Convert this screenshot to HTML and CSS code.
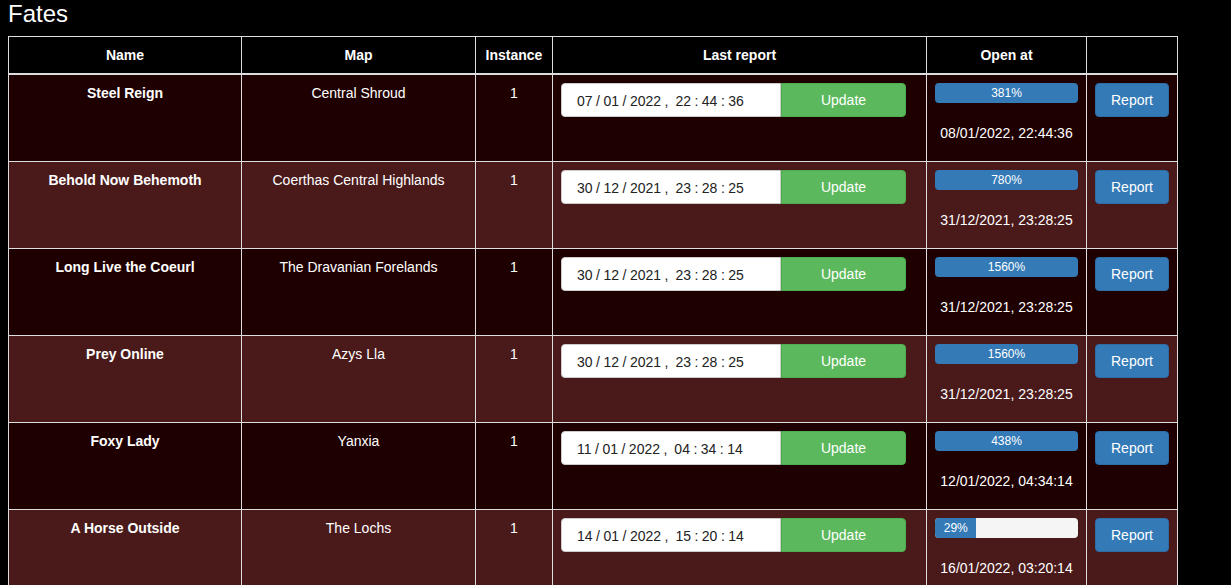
FILE: index.html
```html
<!DOCTYPE html>
<html>
<head>
    <meta charset="UTF-8">
    <title>Fates</title>
    <link rel="stylesheet" href="styles.css">
</head>
<body>
    <h1 class="page-title">Fates</h1>
    <table class="fate-table">
        <colgroup>
            <col class="col-name">
            <col class="col-map">
            <col class="col-instance">
            <col class="col-report">
            <col class="col-open">
            <col class="col-action">
        </colgroup>
        <thead>
            <tr>
                <th>Name</th>
                <th>Map</th>
                <th>Instance</th>
                <th>Last report</th>
                <th>Open at</th>
                <th></th>
            </tr>
        </thead>
        <tbody>
            <tr>
                <td class="fate-name">Steel Reign</td>
                <td>Central Shroud</td>
                <td>1</td>
                <td>
                    <div class="input-group">
                        <span class="date-input">07 / 01 / 2022 ,  22 : 44 : 36</span>
                        <button class="btn btn-success">Update</button>
                    </div>
                </td>
                <td>
                    <div class="progress"><div class="progress-bar" style="width: 100%">381%</div></div>
                    <div class="open-time">08/01/2022, 22:44:36</div>
                </td>
                <td><button class="btn btn-primary">Report</button></td>
            </tr>
            <tr>
                <td class="fate-name">Behold Now Behemoth</td>
                <td>Coerthas Central Highlands</td>
                <td>1</td>
                <td>
                    <div class="input-group">
                        <span class="date-input">30 / 12 / 2021 ,  23 : 28 : 25</span>
                        <button class="btn btn-success">Update</button>
                    </div>
                </td>
                <td>
                    <div class="progress"><div class="progress-bar" style="width: 100%">780%</div></div>
                    <div class="open-time">31/12/2021, 23:28:25</div>
                </td>
                <td><button class="btn btn-primary">Report</button></td>
            </tr>
            <tr>
                <td class="fate-name">Long Live the Coeurl</td>
                <td>The Dravanian Forelands</td>
                <td>1</td>
                <td>
                    <div class="input-group">
                        <span class="date-input">30 / 12 / 2021 ,  23 : 28 : 25</span>
                        <button class="btn btn-success">Update</button>
                    </div>
                </td>
                <td>
                    <div class="progress"><div class="progress-bar" style="width: 100%">1560%</div></div>
                    <div class="open-time">31/12/2021, 23:28:25</div>
                </td>
                <td><button class="btn btn-primary">Report</button></td>
            </tr>
            <tr>
                <td class="fate-name">Prey Online</td>
                <td>Azys Lla</td>
                <td>1</td>
                <td>
                    <div class="input-group">
                        <span class="date-input">30 / 12 / 2021 ,  23 : 28 : 25</span>
                        <button class="btn btn-success">Update</button>
                    </div>
                </td>
                <td>
                    <div class="progress"><div class="progress-bar" style="width: 100%">1560%</div></div>
                    <div class="open-time">31/12/2021, 23:28:25</div>
                </td>
                <td><button class="btn btn-primary">Report</button></td>
            </tr>
            <tr>
                <td class="fate-name">Foxy Lady</td>
                <td>Yanxia</td>
                <td>1</td>
                <td>
                    <div class="input-group">
                        <span class="date-input">11 / 01 / 2022 ,  04 : 34 : 14</span>
                        <button class="btn btn-success">Update</button>
                    </div>
                </td>
                <td>
                    <div class="progress"><div class="progress-bar" style="width: 100%">438%</div></div>
                    <div class="open-time">12/01/2022, 04:34:14</div>
                </td>
                <td><button class="btn btn-primary">Report</button></td>
            </tr>
            <tr>
                <td class="fate-name">A Horse Outside</td>
                <td>The Lochs</td>
                <td>1</td>
                <td>
                    <div class="input-group">
                        <span class="date-input">14 / 01 / 2022 ,  15 : 20 : 14</span>
                        <button class="btn btn-success">Update</button>
                    </div>
                </td>
                <td>
                    <div class="progress"><div class="progress-bar" style="width: 29%">29%</div></div>
                    <div class="open-time">16/01/2022, 03:20:14</div>
                </td>
                <td><button class="btn btn-primary">Report</button></td>
            </tr>
        </tbody>
    </table>
</body>
</html>
```

FILE: styles.css
```css
body {
    font-family: "Liberation Sans", Arial, Helvetica, sans-serif;
    font-size: 14px;
    line-height: 20px;
    margin: 0 8px;
    background-color: #000;
    color: #fff;
}
.page-title {
    font-size: 24px;
    font-weight: normal;
    line-height: 28px;
    margin: 0 0 8px 0;
}
.fate-table {
    width: 1169px;
    table-layout: fixed;
    border-collapse: collapse;
}
.col-name { width: 233px; }
.col-map { width: 234px; }
.col-instance { width: 77px; }
.col-report { width: 374px; }
.col-open { width: 160px; }
.col-action { width: 91px; }
.fate-table th,
.fate-table td {
    border: 1px solid #ddd;
    padding: 8px;
    text-align: center;
    vertical-align: top;
}
.fate-table th {
    font-weight: bold;
    border-bottom: 2px solid #ddd;
}
.fate-table td {
    height: 70px;
}
.fate-table tbody tr:nth-child(odd) {
    background-color: #1f0000;
}
.fate-table tbody tr:nth-child(even) {
    background-color: #4a1a1b;
}
.fate-name {
    font-weight: bold;
}
.input-group {
    display: flex;
}
.date-input {
    box-sizing: border-box;
    width: 220px;
    height: 34px;
    padding: 7px 0 0 15px;
    background-color: #fff;
    color: #222;
    border: 1px solid #ccc;
    border-radius: 4px 0 0 4px;
    white-space: pre;
    word-spacing: -0.4px;
    text-align: left;
}
.btn {
    box-sizing: border-box;
    height: 34px;
    padding: 6px 12px;
    font-family: inherit;
    font-size: 14px;
    line-height: 20px;
    color: #fff;
    border: 1px solid transparent;
    border-radius: 4px;
    cursor: pointer;
}
.btn-success {
    width: 125px;
    background-color: #5cb85c;
    border-color: #4cae4c;
    border-radius: 0 4px 4px 0;
}
.btn-primary {
    width: 74px;
    background-color: #337ab7;
    border-color: #2e6da4;
}
.progress {
    height: 20px;
    margin-bottom: 20px;
    background-color: #f5f5f5;
    border-radius: 4px;
    overflow: hidden;
}
.progress-bar {
    height: 100%;
    font-size: 12px;
    line-height: 20px;
    color: #fff;
    background-color: #337ab7;
    text-align: center;
}
.open-time {
    line-height: 20px;
}
```
